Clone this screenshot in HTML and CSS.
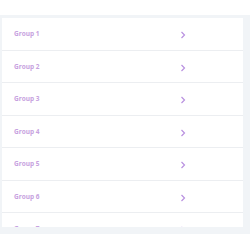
FILE: index.html
```html
<!DOCTYPE html>
<html lang="en">
  <head>
    <meta charset="UTF-8" />
    <title>Groups</title>
    <link rel="stylesheet" href="styles.css">
  </head>
  <body>
    <div class="panel">
      <ul class="groups">
        <li class="group"><span class="name">Group 1</span><span class="arrow"><svg viewBox="0 0 6 8" width="6" height="8"><path d="M1.5 1 L4.5 4 L1.5 7" /></svg></span></li>
        <li class="group"><span class="name">Group 2</span><span class="arrow"><svg viewBox="0 0 6 8" width="6" height="8"><path d="M1.5 1 L4.5 4 L1.5 7" /></svg></span></li>
        <li class="group"><span class="name">Group 3</span><span class="arrow"><svg viewBox="0 0 6 8" width="6" height="8"><path d="M1.5 1 L4.5 4 L1.5 7" /></svg></span></li>
        <li class="group"><span class="name">Group 4</span><span class="arrow"><svg viewBox="0 0 6 8" width="6" height="8"><path d="M1.5 1 L4.5 4 L1.5 7" /></svg></span></li>
        <li class="group"><span class="name">Group 5</span><span class="arrow"><svg viewBox="0 0 6 8" width="6" height="8"><path d="M1.5 1 L4.5 4 L1.5 7" /></svg></span></li>
        <li class="group"><span class="name">Group 6</span><span class="arrow"><svg viewBox="0 0 6 8" width="6" height="8"><path d="M1.5 1 L4.5 4 L1.5 7" /></svg></span></li>
        <li class="group"><span class="name">Group 7</span><span class="arrow"><svg viewBox="0 0 6 8" width="6" height="8"><path d="M1.5 1 L4.5 4 L1.5 7" /></svg></span></li>
      </ul>
    </div>
  </body>
</html>
```

FILE: styles.css
```css
*{
    margin: 0;
    padding: 0;
    box-sizing: border-box;
}
body{
    background: #ffffff;
    font-family: "Open Sans", "Liberation Sans", sans-serif;
}
.panel{
    margin-top: 15px;
    background: #f1f4f7;
    padding: 3px 7px 7px 2px;
}
.groups{
    list-style: none;
    height: 209px;
    overflow: hidden;
    background: #ffffff;
}
.group{
    display: flex;
    align-items: center;
    height: 32.5px;
    padding-left: 12px;
    border-bottom: 1px solid #eceef1;
}
.name{
    width: 166px;
    font-size: 6.5px;
    font-weight: 700;
    color: #c7a2e0;
}
.arrow{
    display: flex;
    padding-top: 3px;
}
.arrow svg{
    fill: none;
    stroke: #b991e0;
    stroke-width: 1.2;
}
```
